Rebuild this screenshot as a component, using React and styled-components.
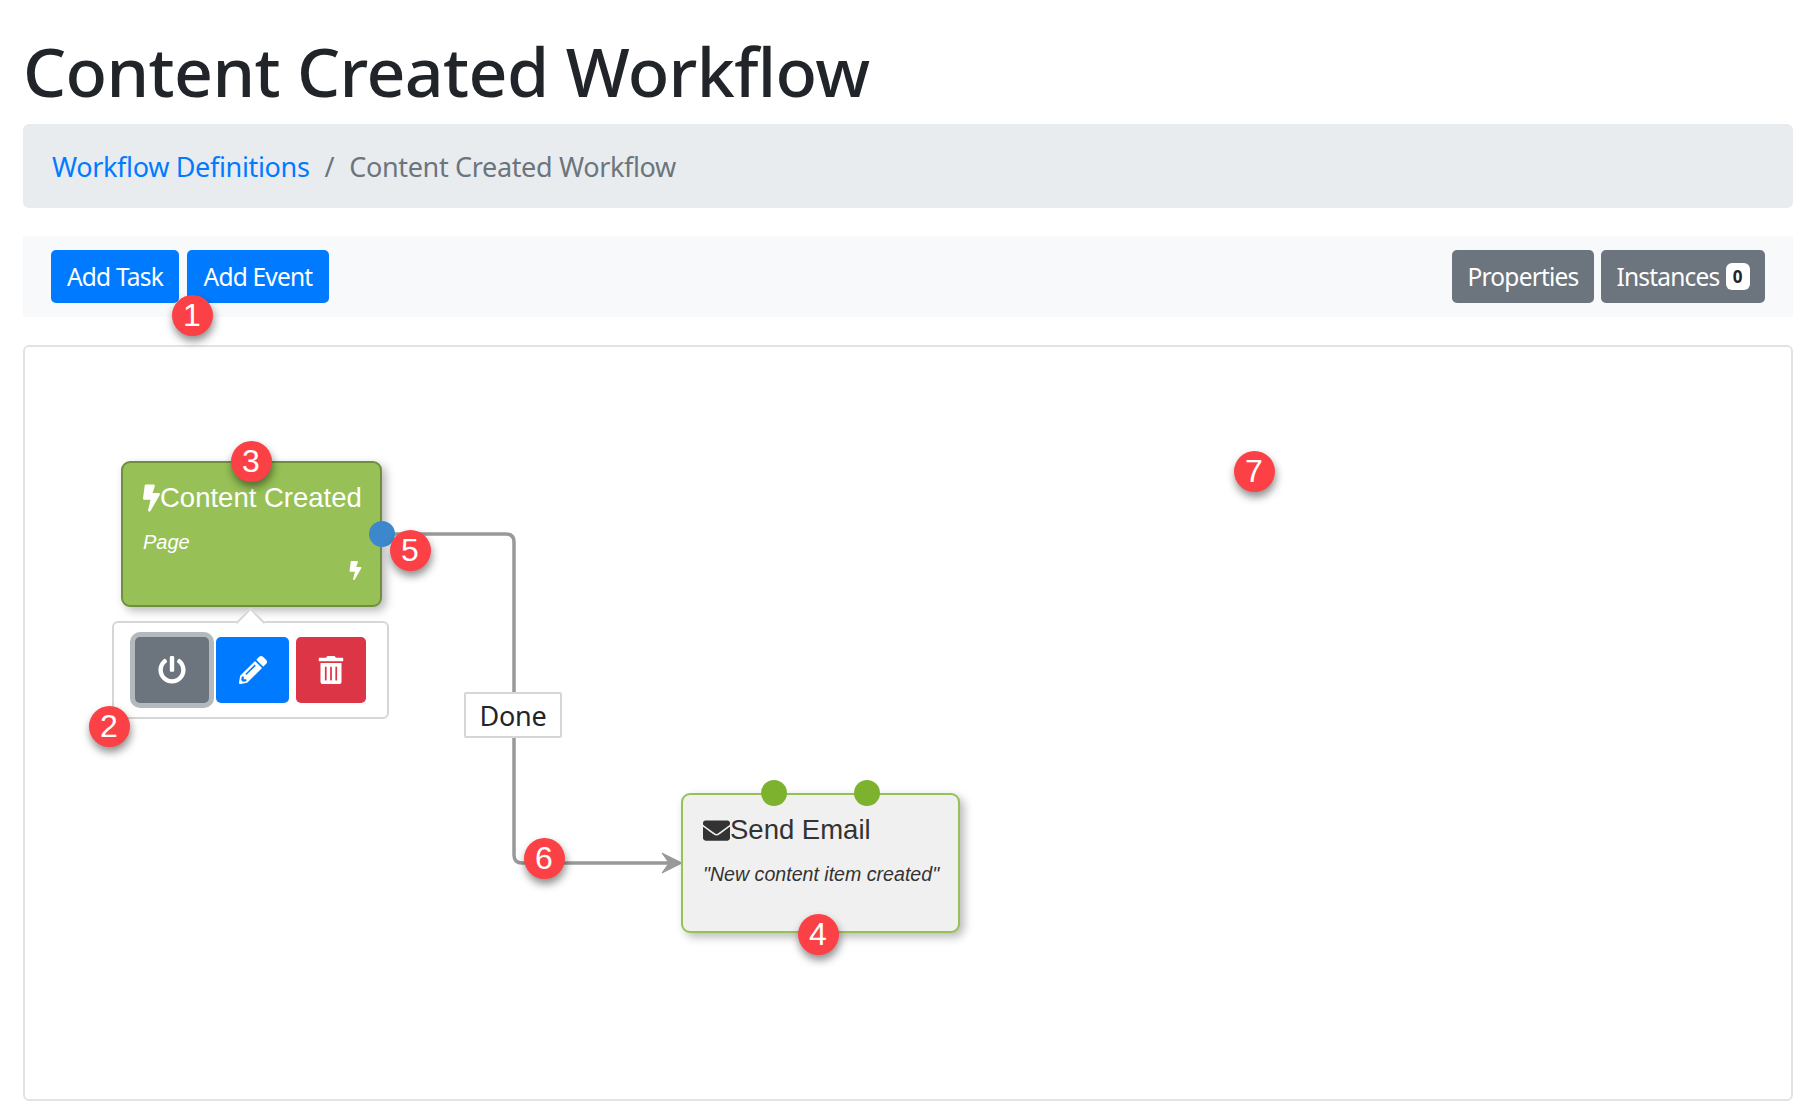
import styled, { createGlobalStyle } from 'styled-components';
import { FaBolt, FaEnvelope, FaPowerOff, FaPencilAlt, FaTrashAlt } from 'react-icons/fa';

const GlobalStyle = createGlobalStyle`
  html, body {
    margin: 0;
    padding: 0;
    background: #fff;
    font-family: "Noto Sans", "Open Sans", sans-serif;
    color: #212529;
  }
`;

const Page = styled.div`
  width: 1810px;
  height: 1112px;
  padding: 0 17px 0 23px;
  box-sizing: border-box;
  overflow: hidden;
`;

const Title = styled.h1`
  margin: 0;
  height: 124px;
  padding-top: 29px;
  box-sizing: border-box;
  font-size: 68px;
  line-height: 84px;
  font-weight: 500;
  letter-spacing: -0.6px;
  white-space: nowrap;
`;

const Breadcrumb = styled.nav`
  display: flex;
  align-items: center;
  height: 84px;
  padding: 0 29px;
  border-radius: 6px;
  background: #e9ecef;
  font-size: 27px;
  letter-spacing: -0.34px;
`;

const Crumb = styled.a`
  color: #007bff;
  text-decoration: none;
`;

const Separator = styled.span`
  color: #6c757d;
  padding: 0 15px;
`;

const Current = styled.span`
  color: #6c757d;
`;

const Toolbar = styled.div`
  display: flex;
  justify-content: space-between;
  align-items: center;
  height: 81px;
  margin-top: 28px;
  padding: 0 28px;
  background: #f8f9fa;
`;

const ButtonGroup = styled.div`
  display: flex;
  gap: ${(p) => p.$gap}px;
`;

const Button = styled.button`
  display: flex;
  align-items: center;
  justify-content: center;
  height: 53px;
  width: ${(p) => p.$width}px;
  padding: 0;
  border: none;
  border-radius: 5px;
  background: ${(p) => p.$color};
  color: #fff;
  font-family: inherit;
  font-size: 24.5px;
  letter-spacing: -0.8px;
`;

const Pill = styled.span`
  display: inline-block;
  width: 24px;
  height: 27px;
  margin-left: 6px;
  border-radius: 6px;
  background: #fff;
  color: #212529;
  font-size: 17px;
  font-weight: 700;
  line-height: 27px;
  text-align: center;
  letter-spacing: 0;
`;

const Canvas = styled.div`
  position: relative;
  height: 756px;
  margin-top: 28px;
  box-sizing: border-box;
  border: 2px solid #e3e3e3;
  border-radius: 6px;
  background: #fff;
`;

const Wires = styled.svg`
  position: absolute;
  left: -25px;
  top: -347px;
  width: 1810px;
  height: 1112px;
  pointer-events: none;
`;

const Node = styled.div`
  position: absolute;
  left: ${(p) => p.$x}px;
  top: ${(p) => p.$y}px;
  width: ${(p) => p.$w}px;
  height: ${(p) => p.$h}px;
  box-sizing: border-box;
  padding: 19px 20px 0;
  border: ${(p) => p.$line}px solid ${(p) => p.$border};
  border-radius: 9px;
  background: ${(p) => p.$bg};
  color: ${(p) => p.$fg};
  font-family: "Liberation Sans", Arial, sans-serif;
  box-shadow: 4px 4px 10px rgba(0, 0, 0, 0.28);
`;

const NodeTitle = styled.div`
  display: flex;
  align-items: center;
  height: 32px;
  font-size: 27.5px;
  line-height: 32px;
  white-space: nowrap;
`;

const TitleBolt = styled(FaBolt)`
  flex: none;
  width: 17px;
  height: 28px;
`;

const TitleEnvelope = styled(FaEnvelope)`
  flex: none;
  width: 27px;
  height: 27px;
`;

const NodeText = styled.div`
  margin-top: 16px;
  font-size: ${(p) => p.$size}px;
  line-height: 24px;
  font-style: italic;
  white-space: nowrap;
`;

const CornerIcon = styled.div`
  position: absolute;
  right: 15px;
  bottom: 25px;
  font-size: 19px;
  line-height: 0;
`;

const Endpoint = styled.span`
  position: absolute;
  left: ${(p) => p.$x}px;
  top: ${(p) => p.$y}px;
  width: 26px;
  height: 26px;
  border-radius: 50%;
  background: ${(p) => p.$color};
`;

const Popover = styled.div`
  position: absolute;
  left: 87px;
  top: 274px;
  display: flex;
  gap: 7px;
  width: 277px;
  height: 98px;
  box-sizing: border-box;
  padding: 14px 0 0 21px;
  border: 2px solid #d6d6d6;
  border-radius: 6px;
  background: #fff;

  &::before {
    content: '';
    position: absolute;
    left: 126px;
    top: -11.5px;
    width: 21px;
    height: 21px;
    box-sizing: border-box;
    border-top: 2px solid #d6d6d6;
    border-left: 2px solid #d6d6d6;
    background: #fff;
    transform: rotate(45deg);
  }
`;

const ToolButton = styled.button`
  display: flex;
  align-items: center;
  justify-content: center;
  width: ${(p) => p.$w}px;
  height: 66px;
  padding: 0;
  border: none;
  border-radius: 5px;
  background: ${(p) => p.$color};
  color: #fff;
  font-size: 28px;
  box-shadow: ${(p) => (p.$ring ? '0 0 0 5px rgba(130, 138, 145, 0.6)' : 'none')};
`;

const Label = styled.div`
  position: absolute;
  left: 439px;
  top: 345px;
  width: 98px;
  height: 46px;
  box-sizing: border-box;
  border: 2px solid #d6d6d6;
  border-radius: 2px;
  background: #fff;
  font-size: 27px;
  line-height: 43px;
  text-align: center;
  letter-spacing: -0.3px;
`;

const Badge = styled.span`
  position: absolute;
  left: ${(p) => p.$x - 20.5}px;
  top: ${(p) => p.$y - 20.5}px;
  width: 41px;
  height: 41px;
  border-radius: 50%;
  background: #fb4146;
  color: #fff;
  font-family: "Liberation Sans", Arial, sans-serif;
  font-size: 32px;
  line-height: 41px;
  text-align: center;
  box-shadow: 1px 5px 8px rgba(0, 0, 0, 0.45);
  z-index: 5;
`;

// badge positions are page coordinates, Canvas starts at 25,347
const badges = [
  [2, 109, 726],
  [3, 251, 461],
  [4, 818, 934],
  [5, 410, 550],
  [6, 544, 858],
  [7, 1254, 471],
];

export default function App() {
  return (
    <Page>
      <GlobalStyle />
      <Title>Content Created Workflow</Title>
      <Breadcrumb>
        <Crumb href="#">Workflow Definitions</Crumb>
        <Separator>/</Separator>
        <Current>Content Created Workflow</Current>
      </Breadcrumb>
      <Toolbar>
        <ButtonGroup $gap={8}>
          <Button $color="#007bff" $width={128}>Add Task</Button>
          <Button $color="#007bff" $width={142}>Add Event</Button>
        </ButtonGroup>
        <ButtonGroup $gap={7}>
          <Button $color="#6c757d" $width={142}>Properties</Button>
          <Button $color="#6c757d" $width={164}>Instances<Pill>0</Pill></Button>
        </ButtonGroup>
      </Toolbar>
      <Canvas>
        <Wires viewBox="0 0 1810 1112">
          <path d="M382 534 H506 Q514 534 514 542 V855 Q514 863 522 863 H674" fill="none" stroke="#999" strokeWidth="3.5" />
          <path d="M662 853 L682 863 L662 873 L669 863 Z" fill="#999" stroke="#999" strokeWidth="1" strokeLinejoin="round" />
        </Wires>

        <Node $x={96} $y={114} $w={261} $h={146} $line={2} $border="#6f8f3f" $bg="#97c156" $fg="#fff">
          <NodeTitle><TitleBolt />Content Created</NodeTitle>
          <NodeText $size={20}>Page</NodeText>
          <CornerIcon><FaBolt /></CornerIcon>
          <Endpoint $x={246} $y={58} $color="#3d88cc" />
        </Node>

        <Popover>
          <ToolButton $w={74} $color="#6c757d" $ring><FaPowerOff /></ToolButton>
          <ToolButton $w={73} $color="#007bff"><FaPencilAlt /></ToolButton>
          <ToolButton $w={70} $color="#dc3545"><FaTrashAlt /></ToolButton>
        </Popover>

        <Label>Done</Label>

        <Node $x={656} $y={446} $w={279} $h={140} $line={2.5} $border="#97c156" $bg="#f0f0f0" $fg="#333">
          <NodeTitle><TitleEnvelope />Send Email</NodeTitle>
          <NodeText $size={19.6}>"New content item created"</NodeText>
          <Endpoint $x={78} $y={-15} $color="#7db22f" />
          <Endpoint $x={171} $y={-15} $color="#7db22f" />
        </Node>

        {badges.map(([n, x, y]) => (
          <Badge key={n} $x={x - 25} $y={y - 347}>{n}</Badge>
        ))}
      </Canvas>
      <Badge $x={192} $y={315}>1</Badge>
    </Page>
  );
}
